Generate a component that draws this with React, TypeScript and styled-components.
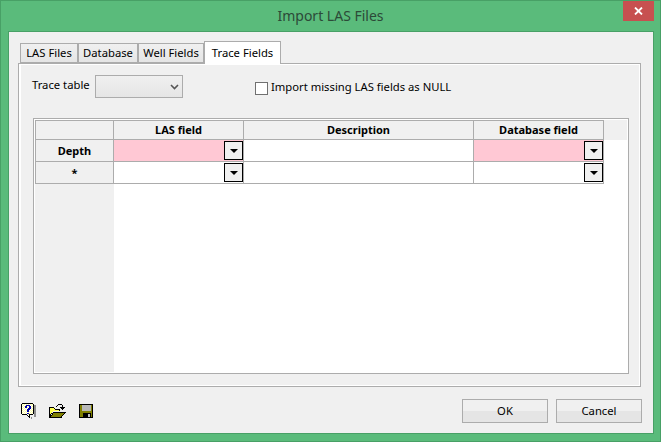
import React from "react";
import styled, { createGlobalStyle } from "styled-components";

const GlobalStyle = createGlobalStyle`
	html, body {
		margin: 0;
		padding: 0;
		background: #5abb7b;
	}
	* {
		box-sizing: border-box;
	}
`;

const Frame = styled.div`
	width: 661px;
	height: 442px;
	background: #5abb7b;
	border: 1px solid #48a066;
	display: flex;
	flex-direction: column;
	font-family: "Noto Sans", "Open Sans", sans-serif;
	font-size: 11.25px;
	color: #000;
	overflow: hidden;
`;

const TitleBar = styled.div`
	height: 30px;
	flex: none;
	display: flex;
	justify-content: flex-end;
	position: relative;
	padding-right: 6px;
`;

const Title = styled.div`
	position: absolute;
	left: 0;
	right: 0;
	top: 5px;
	text-align: center;
	font-size: 14px;
	line-height: 20px;
	color: #2c4a38;
`;

const CloseButton = styled.div`
	width: 31px;
	height: 20px;
	background: #c75050;
	display: flex;
	align-items: center;
	justify-content: center;
`;

const Client = styled.div`
	width: 646px;
	height: 403px;
	margin-left: 7px;
	background: #f0f0f0;
	border: 1px solid #48a066;
	padding: 9px 11px 0 9px;
	display: flex;
	flex-direction: column;
`;

const TabStrip = styled.div`
	display: flex;
	align-items: flex-end;
	height: 22px;
	padding-left: 2px;
	position: relative;
	z-index: 1;
`;

const Tab = styled.div<{ $active?: boolean; $w: number }>`
	width: ${(p) => p.$w}px;
	height: ${(p) => (p.$active ? 23 : 20)}px;
	margin-bottom: ${(p) => (p.$active ? -1 : 0)}px;
	background: ${(p) => (p.$active ? "#fff" : "linear-gradient(#f0f0f0, #e5e5e5)")};
	border: 1px solid #acacac;
	border-bottom: ${(p) => (p.$active ? "none" : "1px solid #acacac")};
	display: flex;
	align-items: center;
	justify-content: center;
	line-height: 16px;
`;

const Pane = styled.div`
	width: 623px;
	height: 324px;
	flex: none;
	background: #f0f0f0;
	border: 1px solid #acacac;
	box-shadow: inset 2px 1px 0 #fff, inset -1px -1px 0 #fff;
	padding: 11px 12px 12px 14px;
	display: flex;
	flex-direction: column;
`;

const OptionsRow = styled.div`
	display: flex;
	align-items: flex-start;
	height: 43px;
	flex: none;
`;

const FieldLabel = styled.div`
	line-height: 16px;
	margin: 2px 0 0 -1px;
	width: 63px;
`;

const Combo = styled.div`
	width: 88px;
	height: 23px;
	border: 1px solid #acacac;
	background: linear-gradient(#f0f0f0, #e5e5e5);
	display: flex;
	align-items: center;
	justify-content: flex-end;
	padding-right: 3px;
`;

const CheckRow = styled.label`
	display: flex;
	align-items: center;
	margin: 5px 0 0 72px;
	gap: 3px;
	line-height: 14px;
`;

const CheckBox = styled.span`
	width: 13px;
	height: 13px;
	background: #fff;
	border: 1px solid #707070;
`;

const CheckText = styled.span`
	margin-bottom: 2px;
`;

const GridBox = styled.div`
	width: 596px;
	height: 256px;
	flex: none;
	border: 1px solid #acacac;
	padding: 1px 0 1px 1px;
	background: #fff;
	display: flex;
	flex-direction: column;
	position: relative;
`;

const Table = styled.div`
	display: grid;
	grid-template-columns: 78px 130px 230px 130px;
	grid-template-rows: 19px 22px 22px;
	width: max-content;
	border-left: 1px solid #acacac;
	border-top: 1px solid #acacac;
`;

const HeaderStrip = styled.div`
	position: absolute;
	left: 570px;
	right: 1px;
	top: 1px;
	height: 20px;
	background: #f0f0f0;
`;

const SideFill = styled.div`
	flex: 1;
	width: 79px;
	background: #f0f0f0;
`;

const Cell = styled.div<{ $head?: boolean; $pink?: boolean; $end?: boolean }>`
	background: ${(p) => (p.$head ? "#f0f0f0" : p.$pink ? "#ffc8d4" : "#fff")};
	border-right: 1px solid #acacac;
	border-bottom: 1px solid #acacac;
	font-weight: ${(p) => (p.$head ? 700 : 400)};
	font-size: ${(p) => (p.$head ? "11px" : "inherit")};
	display: flex;
	align-items: center;
	justify-content: ${(p) => (p.$end ? "flex-end" : "center")};
	line-height: 16px;
`;

const DropButton = styled.div`
	width: 19px;
	height: 19px;
	background: #f0f0f0;
	border: 1px solid #000;
	display: flex;
	align-items: center;
	justify-content: center;
`;

const Arrow = styled.span`
	width: 0;
	height: 0;
	border-left: 4.5px solid transparent;
	border-right: 4.5px solid transparent;
	border-top: 4px solid #000;
`;

const Footer = styled.div`
	flex: 1;
	display: flex;
	align-items: center;
	justify-content: space-between;
	padding: 1px 0 0 3px;
`;

const IconRow = styled.div`
	display: flex;
	align-items: center;
	gap: 12px;
`;

const ButtonRow = styled.div`
	display: flex;
	gap: 8px;
`;

const PushButton = styled.div`
	width: 86px;
	height: 24px;
	border: 1px solid #acacac;
	background: linear-gradient(#f0f0f0 50%, #e5e5e5 50%);
	display: flex;
	align-items: center;
	justify-content: center;
`;

const HelpIcon = () => (
	<svg width="16" height="16" viewBox="0 0 16 16" shapeRendering="crispEdges">
		<defs>
			<pattern id="dither" width="2" height="2" patternUnits="userSpaceOnUse">
				<rect width="2" height="2" fill="#ffffff" />
				<rect width="1" height="1" fill="#ffffa0" />
				<rect x="1" y="1" width="1" height="1" fill="#ffffa0" />
			</pattern>
		</defs>
		<path d="M14 2h1v12h-4v2h-1v-2h3V2z" fill="#909090" />
		<path d="M1 0h11v1h1v10h-1v1H9v3H8v-1H7v-1H6v-1H1v-1H0V1h1z" fill="#000" />
		<path d="M1 1h11v10H8v2H7v-1H6v-1H1z" fill="url(#dither)" />
		<path d="M5 2h4v1h1v3H9v1H8v2H6V6h1V5h1V3H6v2H4V3h1z" fill="#0000b0" />
		<path d="M6 9.5h2V11H6z" fill="#0000b0" />
	</svg>
);

const OpenIcon = () => (
	<svg width="18" height="14" viewBox="0 0 18 14" shapeRendering="crispEdges">
		<path d="M7 2h1V1h1V0h4v1h1v2h2v1h-1v1h-1v1h-1V5h-1V4h-1V3h2V1H9v1H8v1H7z" fill="#000" />
		<path d="M0 3h5v1h1v1h5v2H4v1H3v2H2v2H1v1H0z" fill="#000" />
		<path d="M1 4h4v1h1v1h4v1H4v1H3v1H2v1H1z" fill="#ffff50" />
		<path d="M4 8h13v1h-1v1h-1v1h-1v1h-1v2H0v-1h1v-1h1v-1h1V9h1z" fill="#000" />
		<path d="M4 9h11v1h-1v1h-1v1h-1v1H2v-1h1v-1h1z" fill="#808000" />
	</svg>
);

const SaveIcon = () => (
	<svg width="15" height="14" viewBox="0 0 15 14" shapeRendering="crispEdges">
		<path d="M0 0h14v14H0z" fill="#000" />
		<path d="M1 1h12v12H1z" fill="#808000" />
		<path d="M3 0h9v7H3z" fill="#000" />
		<path d="M3 1h9v6H3z" fill="#b8b8b8" />
		<path d="M4 9h8v5H4z" fill="#000" />
		<path d="M9 10h2v3H9z" fill="#c0c0c0" />
	</svg>
);

const tabs = [
	{ label: "LAS Files", w: 58 },
	{ label: "Database", w: 60 },
	{ label: "Well Fields", w: 66 },
	{ label: "Trace Fields", w: 77, active: true },
];

const Chevron = () => (
	<svg width="9" height="6" viewBox="0 0 9 6">
		<path d="M1 1l3.5 3.5L8 1" fill="none" stroke="#555" strokeWidth="1.6" />
	</svg>
);

const Dropdown = () => (
	<DropButton>
		<Arrow />
	</DropButton>
);

const App: React.FC = () => {
	return (
		<Frame>
			<GlobalStyle />
			<TitleBar>
				<Title>Import LAS Files</Title>
				<CloseButton>
					<svg width="9" height="8" viewBox="0 0 9 8">
						<path d="M1 .5l7 7M8 .5l-7 7" stroke="#fff" strokeWidth="1.8" />
					</svg>
				</CloseButton>
			</TitleBar>
			<Client>
				<TabStrip>
					{tabs.map((t) => (
						<Tab key={t.label} $w={t.w} $active={t.active}>
							{t.label}
						</Tab>
					))}
				</TabStrip>
				<Pane>
					<OptionsRow>
						<FieldLabel>Trace table</FieldLabel>
						<Combo>
							<Chevron />
						</Combo>
						<CheckRow>
							<CheckBox />
							<CheckText>Import missing LAS fields as NULL</CheckText>
						</CheckRow>
					</OptionsRow>
					<GridBox>
						<HeaderStrip />
						<Table>
							<Cell $head />
							<Cell $head>LAS field</Cell>
							<Cell $head>Description</Cell>
							<Cell $head>Database field</Cell>
							<Cell $head>Depth</Cell>
							<Cell $pink $end>
								<Dropdown />
							</Cell>
							<Cell />
							<Cell $pink $end>
								<Dropdown />
							</Cell>
							<Cell $head>*</Cell>
							<Cell $end>
								<Dropdown />
							</Cell>
							<Cell />
							<Cell $end>
								<Dropdown />
							</Cell>
						</Table>
						<SideFill />
					</GridBox>
				</Pane>
				<Footer>
					<IconRow>
						<HelpIcon />
						<OpenIcon />
						<SaveIcon />
					</IconRow>
					<ButtonRow>
						<PushButton>OK</PushButton>
						<PushButton>Cancel</PushButton>
					</ButtonRow>
				</Footer>
			</Client>
		</Frame>
	);
};

export default App;
